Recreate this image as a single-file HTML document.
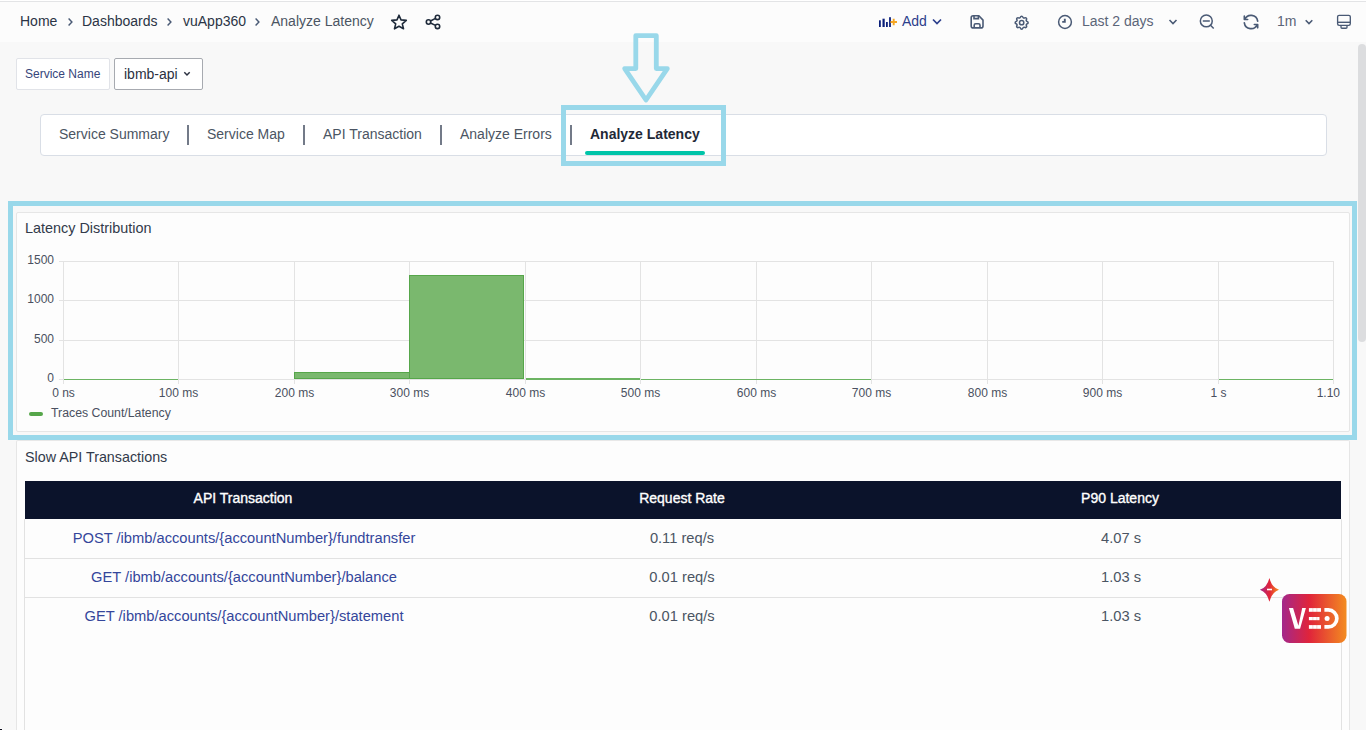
<!DOCTYPE html>
<html><head><meta charset="utf-8">
<style>
*{box-sizing:border-box;margin:0;padding:0}
html,body{width:1366px;height:730px;overflow:hidden}
body{font-family:"Liberation Sans",sans-serif;background:#f8f8f8;position:relative;color:#374151}
.a{position:absolute;white-space:nowrap;line-height:1}
svg{position:absolute;overflow:visible}
#topline{position:absolute;left:0;top:1px;width:1366px;height:1px;background:#e3e4e6}
#header{position:absolute;left:0;top:2px;width:1366px;height:40px;background:#fcfcfc}
.bc{font-size:14px;color:#2b3445;top:14px}
.chev{font-size:14px;color:#4b5563;top:14px}
.ht{font-size:14px;color:#5b6578;top:14px}
.box{position:absolute}
.tab{font-size:14px;color:#4b5563;top:127px}
.tsep{position:absolute;top:125px;width:2px;height:20px;background:#737a88}
.panel{position:absolute;background:#fdfdfd;border:1px solid #e6e6e6}
.hl{position:absolute;border:5px solid #99d8ea}
.row{position:absolute;left:24px;width:1318px;height:39px;border-bottom:1px solid #e2e2e2;border-left:1px solid #e2e2e2;border-right:1px solid #e2e2e2}
.c1,.c2,.c3{position:absolute;top:12px;font-size:14.7px;line-height:1;white-space:nowrap;text-align:center;width:438px}
.r2 .c1,.r2 .c2,.r2 .c3{top:10.5px}
.c1{left:0;color:#34469b}
.c2{left:438px;color:#4b5563}
.c3{left:877px;color:#4b5563}
.th{position:absolute;top:9.5px;font-size:14px;-webkit-text-stroke:0.35px #fff;color:#fff;line-height:1;text-align:center;width:438px;white-space:nowrap}
</style></head><body>
<div style="position:absolute;left:0;top:0;width:1366px;height:1px;background:#fff"></div><div id="topline"></div>
<div id="header"></div>
<div class="a bc" style="left:20px">Home</div>
<svg style="left:66px;top:17px" width="8" height="10" viewBox="0 0 8 10"><path d="M2.6 1.5 L5.9 5 L2.6 8.5" fill="none" stroke="#4a5a75" stroke-width="1.45"/></svg>
<div class="a bc" style="left:82px">Dashboards</div>
<svg style="left:165px;top:17px" width="8" height="10" viewBox="0 0 8 10"><path d="M2.6 1.5 L5.9 5 L2.6 8.5" fill="none" stroke="#4a5a75" stroke-width="1.45"/></svg>
<div class="a bc" style="left:183px">vuApp360</div>
<svg style="left:253px;top:17px" width="8" height="10" viewBox="0 0 8 10"><path d="M2.6 1.5 L5.9 5 L2.6 8.5" fill="none" stroke="#4a5a75" stroke-width="1.45"/></svg>
<div class="a bc" style="left:271px;color:#4b5563">Analyze Latency</div>
<!-- star -->
<svg style="left:389px;top:12px" width="20" height="20" viewBox="0 0 20 20"><path d="M10 3.2 L12 7.9 L17.3 8.4 L13.3 11.9 L14.5 16.8 L10 14.3 L5.5 16.8 L6.7 11.9 L2.7 8.4 L8 7.9 Z" fill="none" stroke="#1e2a3a" stroke-width="1.6" stroke-linejoin="round"/></svg>
<!-- share -->
<svg style="left:423px;top:12px" width="20" height="20" viewBox="0 0 20 20"><circle cx="14.5" cy="5.4" r="2.2" fill="none" stroke="#1e2a3a" stroke-width="1.6"/><circle cx="5.5" cy="10" r="2.2" fill="none" stroke="#1e2a3a" stroke-width="1.6"/><circle cx="14.5" cy="14.4" r="2.2" fill="none" stroke="#1e2a3a" stroke-width="1.6"/><path d="M7.5 9 L12.5 6.4 M7.5 11 L12.5 13.4" stroke="#1e2a3a" stroke-width="1.6"/></svg>

<!-- right header -->
<svg style="left:878px;top:16px" width="20" height="12" viewBox="0 0 20 12">
<rect x="1" y="4.3" width="1.8" height="6.7" fill="#0a1f7a"/><rect x="4.5" y="2.7" width="2.2" height="8.3" fill="#0a1f7a"/><rect x="8" y="6" width="1.8" height="5" fill="#0a1f7a"/><rect x="11.1" y="1.2" width="1.8" height="9.8" fill="#0a1f7a"/>
<path d="M12.5 6 H19 M15.7 2.7 V9.3" stroke="#f5a623" stroke-width="1.9"/></svg>
<div class="a" style="left:902px;top:14px;font-size:14px;color:#2c3e8c">Add</div>
<svg style="left:931px;top:17px" width="12" height="10" viewBox="0 0 12 10"><path d="M2 2.5 L6 6.5 L10 2.5" fill="none" stroke="#2c3e8c" stroke-width="1.7"/></svg>
<!-- save -->
<svg style="left:969px;top:14px" width="16" height="16" viewBox="0 0 16 16"><path d="M4.2 1.8 H9.9 L14 6.1 V11.9 Q14 13.9 12 13.9 H4.2 Q2.2 13.9 2.2 11.9 V3.8 Q2.2 1.8 4.2 1.8 Z" fill="none" stroke="#4a5a75" stroke-width="1.6" stroke-linejoin="round"/><path d="M5 1.9 V4.6 H9.4 V1.9 M5.2 13.8 V11.3 Q5.2 9.8 6.7 9.8 H9.5 Q11 9.8 11 11.3 V13.8" fill="none" stroke="#4a5a75" stroke-width="1.6"/></svg>
<!-- gear -->
<svg style="left:1012.7px;top:13.7px" width="17.3" height="17.3" viewBox="0 0 24 24"><path fill="none" stroke="#4a5a75" stroke-width="2.1" stroke-linecap="round" stroke-linejoin="round" d="M10.325 4.317c.426 -1.756 2.924 -1.756 3.35 0a1.724 1.724 0 0 0 2.573 1.066c1.543 -.94 3.31 .826 2.37 2.37a1.724 1.724 0 0 0 1.065 2.572c1.756 .426 1.756 2.924 0 3.35a1.724 1.724 0 0 0 -1.066 2.573c.94 1.543 -.826 3.31 -2.37 2.37a1.724 1.724 0 0 0 -2.572 1.065c-.426 1.756 -2.924 1.756 -3.35 0a1.724 1.724 0 0 0 -2.573 -1.066c-1.543 .94 -3.31 -.826 -2.37 -2.37a1.724 1.724 0 0 0 -1.065 -2.572c-1.756 -.426 -1.756 -2.924 0 -3.35a1.724 1.724 0 0 0 1.066 -2.573c-.94 -1.543 .826 -3.31 2.37 -2.37c1 .608 2.296 .07 2.572 -1.065z"/><circle cx="12" cy="12" r="3" fill="none" stroke="#4a5a75" stroke-width="2.1"/></svg>
<!-- clock -->
<svg style="left:1057px;top:14px" width="16" height="16" viewBox="0 0 16 16"><circle cx="8" cy="8" r="6.4" fill="none" stroke="#4a5a75" stroke-width="1.5"/><path d="M7.8 4.8 V7.9 H5.2" fill="none" stroke="#4a5a75" stroke-width="1.9"/></svg>
<div class="a ht" style="left:1082px">Last 2 days</div>
<svg style="left:1167px;top:16px" width="12" height="10" viewBox="0 0 12 10"><path d="M2.5 4 L6 7.5 L9.5 4" fill="none" stroke="#4a5a75" stroke-width="1.6"/></svg>
<!-- zoom out -->
<svg style="left:1198px;top:13px" width="18" height="18" viewBox="0 0 18 18"><circle cx="8.3" cy="7.9" r="5.95" fill="none" stroke="#4a5a75" stroke-width="1.5"/><path d="M4.8 7.9 H11.8 M12.5 12.2 L15.7 15.5" stroke="#4a5a75" stroke-width="1.45"/></svg>
<!-- refresh -->
<svg style="left:1241px;top:12px" width="20" height="20" viewBox="0 0 24 24"><path d="M20 11a8.1 8.1 0 0 0 -15.5 -2m-.5 -4v4h4m-4 4a8.1 8.1 0 0 0 15.5 2m.5 4v-4h-4" fill="none" stroke="#4a5a75" stroke-width="2" stroke-linecap="round" stroke-linejoin="round"/></svg>
<div class="a ht" style="left:1277px">1m</div>
<svg style="left:1303px;top:16px" width="12" height="10" viewBox="0 0 12 10"><path d="M2.7 4.3 L6 7.6 L9.3 4.3" fill="none" stroke="#4a5a75" stroke-width="1.6"/></svg>
<!-- monitor -->
<svg style="left:1336px;top:14px" width="17" height="16" viewBox="0 0 17 16"><rect x="1.6" y="1.3" width="12.7" height="10" rx="1.5" fill="none" stroke="#4a5a75" stroke-width="1.35"/><path d="M1.6 8.3 H14.3" stroke="#4a5a75" stroke-width="1.4"/><path d="M5 11.3 V13.2 Q5 14.2 6 14.2 H10 Q11 14.2 11 13.2 V11.3" fill="none" stroke="#4a5a75" stroke-width="1.35"/></svg>

<!-- scrollbar -->
<div style="position:absolute;left:1358px;top:44px;width:8px;height:298px;background:#dcdddf;border-radius:4px"></div>

<!-- service name -->
<div class="box" style="left:16px;top:58px;width:94px;height:32px;background:#fff;border:1px solid #e1e3e8;border-radius:2px"></div>
<div class="a" style="left:25px;top:68px;font-size:12px;color:#36457a">Service Name</div>
<div class="box" style="left:114px;top:58px;width:89px;height:32px;background:#fff;border:1px solid #a7aab0;border-radius:2px"></div>
<div class="a" style="left:124px;top:67px;font-size:14px;color:#2b3040">ibmb-api</div>
<svg style="left:182px;top:70px" width="10" height="8" viewBox="0 0 10 8"><path d="M2.3 2.3 L5 5 L7.7 2.3" fill="none" stroke="#2b3040" stroke-width="1.5"/></svg>

<!-- tab bar -->
<div class="box" style="left:40px;top:114px;width:1287px;height:42px;background:#fff;border:1px solid #d9dee6;border-radius:4px"></div>
<div class="a tab" style="left:59px">Service Summary</div>
<div class="tsep" style="left:187px"></div>
<div class="a tab" style="left:207px">Service Map</div>
<div class="tsep" style="left:303px"></div>
<div class="a tab" style="left:323px">API Transaction</div>
<div class="tsep" style="left:440px"></div>
<div class="a tab" style="left:460px">Analyze Errors</div>
<div class="tsep" style="left:570px"></div>
<div class="a tab" style="left:590px;font-weight:bold;color:#1f2937">Analyze Latency</div>
<div class="box" style="left:585px;top:151px;width:120px;height:4px;background:#00c4a8;border-radius:2px"></div>

<!-- highlight tab -->
<div class="hl" style="left:561px;top:105px;width:165px;height:61px"></div>
<!-- arrow -->
<svg style="left:0;top:0" width="1366" height="730"><path d="M635.8 35.6 H656.3 V68.6 H667.3 L646 100 L624.7 68.6 H635.8 Z" fill="none" stroke="#99d8ea" stroke-width="4.8" stroke-linejoin="round"/></svg>

<!-- latency panel -->
<div class="panel" style="left:16px;top:212px;width:1334px;height:220px;border-radius:2px"></div>
<div class="a" style="left:25px;top:221px;font-size:14.4px;color:#323a4a">Latency Distribution</div>
<svg style="left:0;top:0" width="1366" height="730">
<g stroke="#e3e3e3" stroke-width="1">
<line x1="59" y1="261.5" x2="1334" y2="261.5"/>
<line x1="59" y1="300.5" x2="1334" y2="300.5"/>
<line x1="59" y1="340.5" x2="1334" y2="340.5"/>
<line x1="59" y1="379.5" x2="1334" y2="379.5"/>
<line x1="63.5" y1="261" x2="63.5" y2="384"/>
<line x1="178.5" y1="261" x2="178.5" y2="384"/>
<line x1="294.5" y1="261" x2="294.5" y2="384"/>
<line x1="409.5" y1="261" x2="409.5" y2="384"/>
<line x1="525.5" y1="261" x2="525.5" y2="384"/>
<line x1="640.5" y1="261" x2="640.5" y2="384"/>
<line x1="756.5" y1="261" x2="756.5" y2="384"/>
<line x1="871.5" y1="261" x2="871.5" y2="384"/>
<line x1="987.5" y1="261" x2="987.5" y2="384"/>
<line x1="1102.5" y1="261" x2="1102.5" y2="384"/>
<line x1="1218.5" y1="261" x2="1218.5" y2="384"/>
<line x1="1333.5" y1="261" x2="1333.5" y2="384"/>
</g>
<g fill="#4a5060" font-family="Liberation Sans" font-size="12" text-anchor="middle">
<text x="63.5" y="397">0 ns</text>
<text x="178.5" y="397">100 ms</text>
<text x="294.5" y="397">200 ms</text>
<text x="409.5" y="397">300 ms</text>
<text x="525.5" y="397">400 ms</text>
<text x="640.5" y="397">500 ms</text>
<text x="756.5" y="397">600 ms</text>
<text x="871.5" y="397">700 ms</text>
<text x="987.5" y="397">800 ms</text>
<text x="1102.5" y="397">900 ms</text>
<text x="1218.5" y="397">1 s</text>
<text x="1340" y="397" text-anchor="end">1.10</text>
</g>
<g fill="#4a5060" font-family="Liberation Sans" font-size="12" text-anchor="end">
<text x="54" y="264">1500</text>
<text x="54" y="303">1000</text>
<text x="54" y="343">500</text>
<text x="54" y="382">0</text>
</g>
<!-- bars -->
<g>
<rect x="64" y="379" width="114" height="1" fill="#6cb463"/>
<rect x="294.5" y="372.5" width="115" height="6" fill="#7ab86e" stroke="#56a64a" stroke-width="1"/>
<rect x="409.5" y="275.5" width="114" height="103" fill="#7ab86e" stroke="#56a64a" stroke-width="1"/>
<rect x="526" y="378" width="114" height="2" fill="#6cb463"/>
<rect x="641" y="379" width="230" height="1" fill="#6cb463"/>
<rect x="1219" y="379" width="114" height="1" fill="#6cb463"/>
</g>
</svg>
<div class="box" style="left:29px;top:412px;width:14px;height:4px;background:#56a64a;border-radius:2px"></div>
<div class="a" style="left:51px;top:407px;font-size:12.3px;color:#4a5060">Traces Count/Latency</div>

<!-- highlight chart -->
<div class="hl" style="left:8px;top:201px;width:1349px;height:239px"></div>

<!-- slow api panel -->
<div class="panel" style="left:16px;top:440px;width:1334px;height:300px;border-top-color:#e8e8e8;border-radius:2px"></div>
<div class="a" style="left:25px;top:450px;font-size:14.3px;color:#323a4a">Slow API Transactions</div>
<div class="box" style="left:25px;top:481px;width:1316px;height:38px;background:#0b132b">
<div class="th" style="left:-1px">API Transaction</div>
<div class="th" style="left:438px">Request Rate</div>
<div class="th" style="left:876px">P90 Latency</div>
</div>
<div class="row" style="top:519px;height:40px"><div class="c1">POST /ibmb/accounts/{accountNumber}/fundtransfer</div><div class="c2">0.11 req/s</div><div class="c3">4.07 s</div></div>
<div class="row r2" style="top:559px;height:39px"><div class="c1">GET /ibmb/accounts/{accountNumber}/balance</div><div class="c2">0.01 req/s</div><div class="c3">1.03 s</div></div>
<div class="row r2" style="top:598px;height:39px;border-bottom:none"><div class="c1">GET /ibmb/accounts/{accountNumber}/statement</div><div class="c2">0.01 req/s</div><div class="c3">1.03 s</div></div>
<div class="box" style="left:24px;top:637px;width:1318px;height:100px;border-left:1px solid #e2e2e2;border-right:1px solid #e2e2e2"></div>

<!-- VED logo -->
<svg style="left:1258px;top:576px" width="90" height="70" viewBox="1258 576 90 70">
<defs>
<linearGradient id="g1" gradientUnits="userSpaceOnUse" x1="1282" y1="0" x2="1346.5" y2="0"><stop offset="0" stop-color="#a3288b"/><stop offset="0.42" stop-color="#e0243b"/><stop offset="1" stop-color="#f38c20"/></linearGradient>
<linearGradient id="g2" gradientUnits="userSpaceOnUse" x1="1260" y1="0" x2="1279" y2="0"><stop offset="0" stop-color="#a3288b"/><stop offset="0.5" stop-color="#e2243a"/><stop offset="1" stop-color="#f5901c"/></linearGradient>
</defs>
<path d="M1269.4 577.9 Q1271.8 587.4 1279 589.8 Q1271.8 592.2 1269.4 601.8 Q1267 592.2 1259.9 589.8 Q1267 587.4 1269.4 577.9 Z" fill="url(#g2)"/>
<rect x="1267" y="588.7" width="5" height="1.6" fill="#fff"/>
<rect x="1282" y="594" width="64.5" height="49" rx="7.5" fill="url(#g1)"/>
<path d="M1288.9 608.1 H1293.1 L1298.4 625.7 L1302.2 608.1 H1305.9 L1300.1 628.8 H1294.8 Z" fill="#fff"/>
<g fill="#fff">
<rect x="1308.9" y="608.1" width="12.1" height="3.7"/>
<rect x="1308.9" y="617" width="10.6" height="3.2"/>
<rect x="1308.9" y="625.1" width="12.1" height="3.7"/>
</g>
<g fill="#e5393a" opacity="0.35">
<rect x="1312.6" y="608" width="0.6" height="21"/><rect x="1316.6" y="608" width="0.6" height="21"/>
</g>
<path d="M1324.4 608.1 H1328.35 A10.35 10.35 0 0 1 1328.35 628.8 H1324.4 V625.1 H1328.35 A6.65 6.65 0 0 0 1328.35 611.8 H1324.4 Z" fill="#fff"/>
<circle cx="1327.1" cy="618.5" r="2.5" fill="#fff"/>
</svg>
<div style="position:absolute;left:0;top:728px;width:2px;height:1px;background:#fff"></div><div style="position:absolute;left:0;top:729px;width:2px;height:1px;background:#0b0b1a"></div>
</body></html>
